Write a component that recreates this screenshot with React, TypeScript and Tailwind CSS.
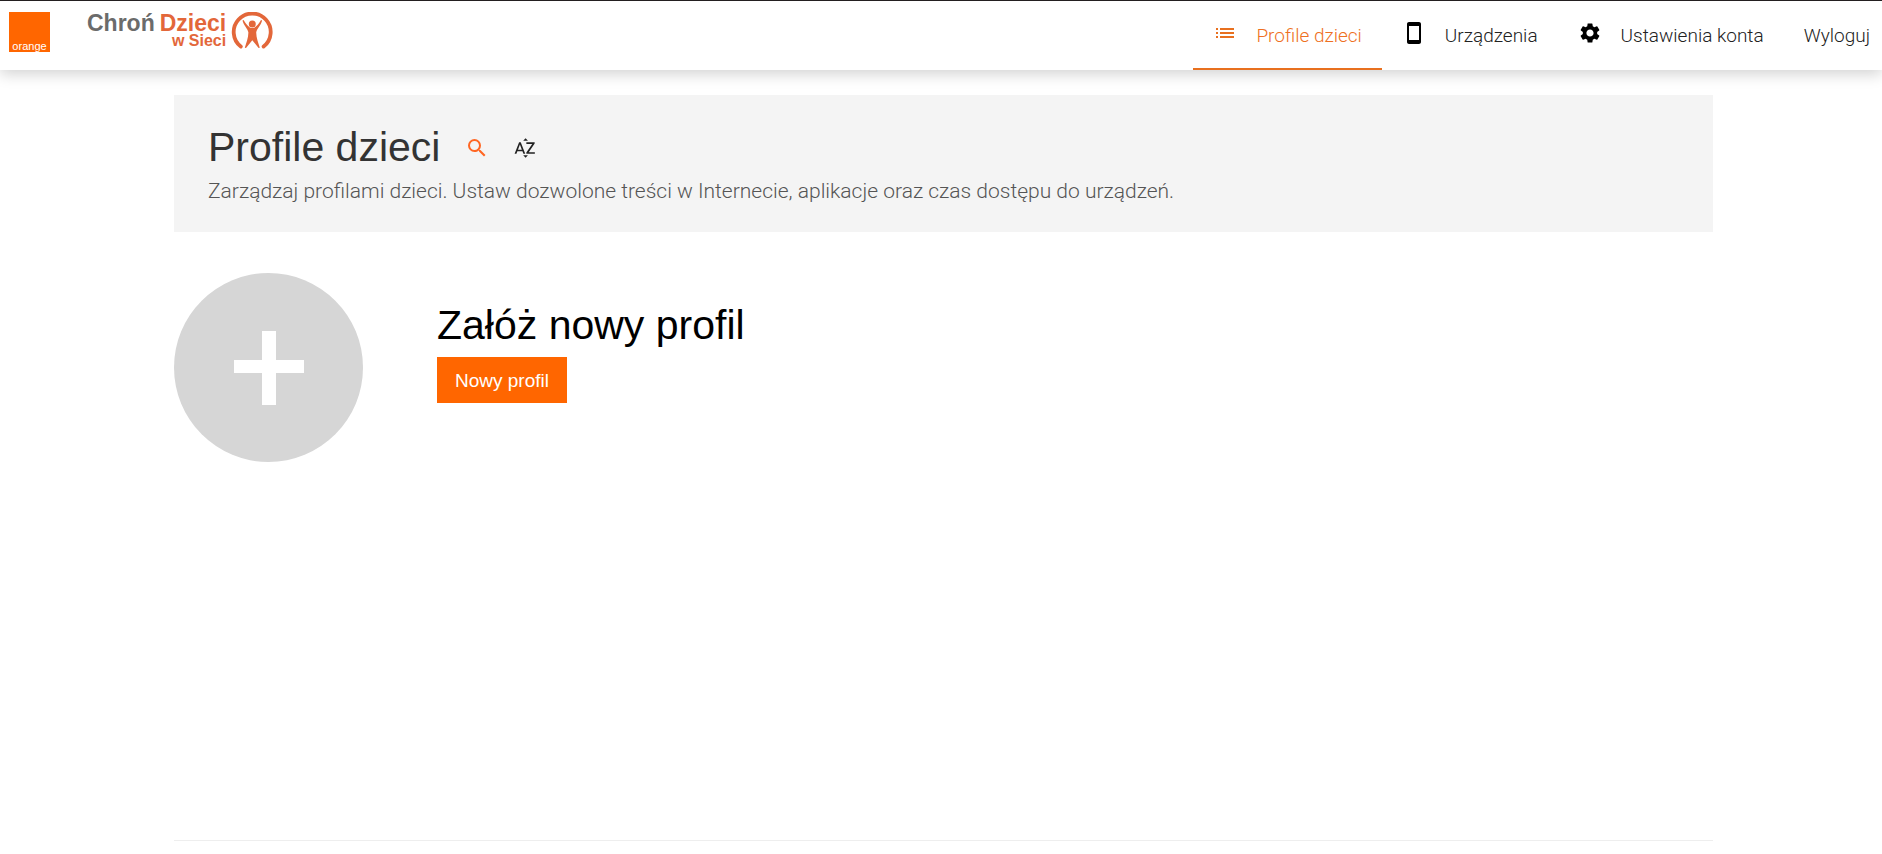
import React from "react";
import { MdList, MdStayCurrentPortrait, MdSettings, MdSearch, MdSortByAlpha } from "react-icons/md";
import type { IconType } from "react-icons";

type NavItem = { label: string; icon?: IconType; active?: boolean };

const navItems: NavItem[] = [
  { label: "Profile dzieci", icon: MdList, active: true },
  { label: "Urządzenia", icon: MdStayCurrentPortrait },
  { label: "Ustawienia konta", icon: MdSettings },
  { label: "Wyloguj" },
];

function OrangeLogo() {
  return (
    <a
      href="#"
      aria-label="Orange"
      className="flex h-10 w-[41px] items-end justify-center bg-[#ff6600] font-[Liberation_Sans,sans-serif] text-[11px] leading-3 font-normal text-white"
    >
      orange
    </a>
  );
}

function ProtectLogo() {
  return (
    <a href="#" className="flex items-center gap-[5px] font-[Liberation_Sans,sans-serif] font-bold text-[#e3673a]">
      <span className="flex flex-col items-end">
        <span className="flex gap-[5px] text-[23px] leading-5">
          <span className="text-[#6b6b6b]">Chroń</span>
          <span>Dzieci</span>
        </span>
        <span className="text-[16px] leading-4">w Sieci</span>
      </span>
      <svg viewBox="0 0 42 38" className="h-[38px] w-[42px]" aria-hidden="true">
        <path d="M9.800 34.600A18.500 18.500 0 1 1 32.600 34.600" fill="none" stroke="currentColor" strokeWidth="3.800" strokeLinecap="round" />
        <circle cx="21.300" cy="12" r="3.500" fill="currentColor" />
        <path
          d="M11.500 8.500L12.600 7.900C15 12 18 16 21.300 16S27.600 12 30 7.900L31.100 8.500C30 13.500 25.600 17 25.200 20.500C25.200 26 27.500 31 28.800 35.800L27.600 36L21.300 28.200L15 36L13.800 35.800C15.100 31 17.400 26 17.400 20.500C17 17 12.600 13.500 11.500 8.500Z"
          fill="currentColor"
        />
      </svg>
    </a>
  );
}

function NavLink({ label, icon: Icon, active }: NavItem) {
  return (
    <a
      href="#"
      aria-current={active ? "page" : undefined}
      className={
        "flex items-center gap-[19px] border-b-2 px-5 " +
        (active ? "border-[#e8701f] text-[#ee7022]" : "border-transparent text-[#222]")
      }
    >
      {Icon && <Icon size={24} className={active ? "-mt-1.5 text-[#e8701f]" : "-mt-1.5 text-black"} />}
      <span>{label}</span>
    </a>
  );
}

export default function App() {
  return (
    <div className="min-h-screen bg-white font-[Roboto,sans-serif] font-light">
      <header className="flex h-[70px] justify-between border-t border-[#231f20] bg-white pl-[9px] shadow-[0_4px_14px_rgba(0,0,0,0.18)]">
        <div className="flex items-start gap-[37px] pt-[11px]">
          <OrangeLogo />
          <ProtectLogo />
        </div>
        <nav className="-mr-2 flex pt-0.5 text-[19px] leading-6">
          {navItems.map((item) => (
            <NavLink key={item.label} {...item} />
          ))}
        </nav>
      </header>

      <main className="pr-[169px] pl-[174px] pt-[25px]">
        <section className="bg-[#f4f4f4] px-[34px] pt-7 pb-[25px]">
          <div className="flex items-center">
            <h1 className="font-[Liberation_Sans,sans-serif] text-[41px] leading-12 font-normal text-[#333]">Profile dzieci</h1>
            <button type="button" aria-label="Szukaj" className="ml-[25px] pt-0.5 text-[#ff6622]">
              <MdSearch size={24} />
            </button>
            <button type="button" aria-label="Sortuj alfabetycznie" className="ml-6 pt-0.5 text-[#222]">
              <MdSortByAlpha size={24} />
            </button>
          </div>
          <p className="mt-1 text-[21px] leading-8 text-[#555]">
            Zarządzaj profilami dzieci. Ustaw dozwolone treści w Internecie, aplikacje oraz czas dostępu do urządzeń.
          </p>
        </section>

        <section className="mt-[41px] flex items-start gap-[74px]">
          <button
            type="button"
            aria-label="Dodaj profil"
            className="flex size-[189px] items-center justify-center rounded-full bg-[#d6d6d6] text-white"
          >
            <svg viewBox="0 0 70 74" className="h-[74px] w-[70px]" aria-hidden="true">
              <path d="M28 0h14v29h28v13H42v32H28V42H0V29h28z" fill="currentColor" />
            </svg>
          </button>
          <div className="flex flex-col items-start pt-7">
            <h2 className="font-[Liberation_Sans,sans-serif] text-[41px] leading-12 font-normal text-black">Załóż nowy profil</h2>
            <button
              type="button"
              className="mt-2 h-[46px] bg-[#ff6600] px-[18px] pt-0.5 font-[Liberation_Sans,sans-serif] text-[19px] font-normal text-white"
            >
              Nowy profil
            </button>
          </div>
        </section>

        <hr className="mt-[378px] border-[#eeeeee]" />
      </main>
    </div>
  );
}
